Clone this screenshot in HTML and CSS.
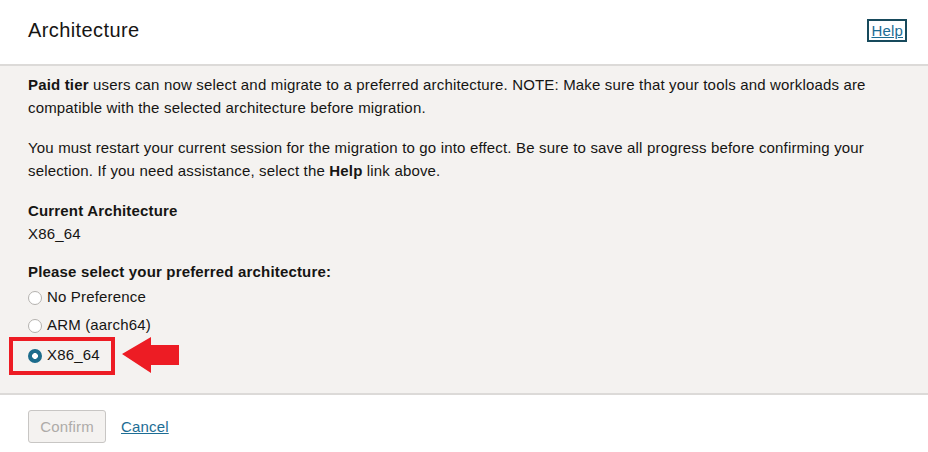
FILE: index.html
```html
<!DOCTYPE html>
<html>
<head>
<meta charset="utf-8">
<link rel="stylesheet" href="styles.css">
</head>
<body>
<div class="dialog">
  <header class="head">
    <h1 class="title">Architecture</h1>
    <a class="help" href="#">Help</a>
  </header>
  <main class="body">
    <p class="para"><b>Paid tier</b> users can now select and migrate to a preferred architecture. NOTE: Make sure that your tools and workloads are compatible with the selected architecture before migration.</p>
    <p class="para">You must restart your current session for the migration to go into effect. Be sure to save all progress before confirming your selection. If you need assistance, select the <b>Help</b> link above.</p>
    <div class="field">
      <div class="label">Current Architecture</div>
      <div class="value">X86_64</div>
    </div>
    <div class="field">
      <div class="label">Please select your preferred architecture:</div>
      <div class="options">
        <div class="option"><span class="radio"></span><span>No Preference</span></div>
        <div class="option"><span class="radio"></span><span>ARM (aarch64)</span></div>
        <div class="option-row">
          <div class="option selected-box"><span class="radio checked"></span><span>X86_64</span></div>
          <svg class="arrow" width="58" height="38" viewBox="0 0 58 38"><polygon points="0,17 29,0 29,8 57,8 57,28 29,28 29,36" fill="#ed1c24"/></svg>
        </div>
      </div>
    </div>
  </main>
  <footer class="foot">
    <button class="btn" disabled>Confirm</button>
    <a class="cancel" href="#">Cancel</a>
  </footer>
</div>
</body>
</html>
```
FILE: styles.css
```css
html, body {
  margin: 0;
  padding: 0;
  background: #fff;
}
body {
  font-family: "Liberation Sans", Arial, sans-serif;
  font-size: 15px;
  letter-spacing: 0.17px;
  color: #161513;
}
.dialog {
  width: 928px;
  height: 452px;
  display: flex;
  flex-direction: column;
}
.head {
  height: 64px;
  display: flex;
  align-items: center;
  justify-content: space-between;
  padding: 0 24px 0 28px;
  border-bottom: 2px solid #dcdad8;
}
.title {
  margin: 0;
  font-size: 20px;
  letter-spacing: 0.4px;
  font-weight: normal;
  color: #161513;
  position: relative;
  top: -2px;
}
.help {
  color: #1d6d94;
  font-size: 15px;
  outline: 2px solid #174a5c;
  outline-offset: 1px;
  padding: 0 1px;
  margin-top: -4px;
}
.body {
  background: #f4f2f0;
  padding: 8px 28px 0 28px;
  height: 319px;
  border-bottom: 2px solid #dcdad8;
  line-height: 22.5px;
}
.para {
  margin: 0 0 18px 0;
}
.field {
  margin-bottom: 16px;
}
.label {
  font-weight: bold;
}
.options {
  display: flex;
  flex-direction: column;
}
.option {
  display: flex;
  align-items: center;
  gap: 5px;
  height: 28px;
}
.option-row {
  display: flex;
  align-items: center;
  margin-left: -19px;
  margin-top: -3px;
}
.selected-box {
  border: 4px solid #ed1c24;
  padding: 0 11px 0 15px;
  height: 30px;
}
.arrow {
  margin-left: 7px;
}
.radio {
  width: 12px;
  height: 12px;
  border: 1px solid #b4b2af;
  border-radius: 50%;
  background: #fff;
  box-sizing: content-box;
  flex: none;
}
.radio.checked {
  width: 14px;
  height: 14px;
  border: none;
  background: radial-gradient(circle, #fff 0 2.6px, #1c6c8c 3.2px);
}
.foot {
  flex: 1;
  display: flex;
  align-items: flex-start;
  gap: 15px;
  padding: 15px 28px 0;
}
.btn {
  font-family: "Liberation Sans", Arial, sans-serif;
  font-size: 15px;
  letter-spacing: 0.17px;
  height: 33px;
  width: 78px;
  background: #f4f2f0;
  border: 1px solid #c8c6c4;
  border-radius: 3px;
  color: #aeaba8;
  padding: 0;
}
.cancel {
  color: #1d6d94;
  font-size: 15px;
  line-height: 33px;
}
```
